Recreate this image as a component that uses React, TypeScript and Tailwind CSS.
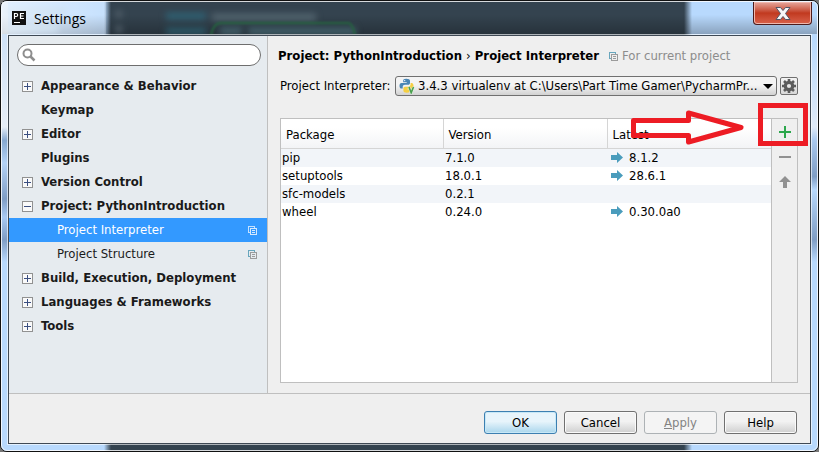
import { useState } from 'react'

type TreeItem = { label: string; kind: 'closed' | 'open' | 'leaf' | 'child' }

const tree: TreeItem[] = [
  { label: 'Appearance & Behavior', kind: 'closed' },
  { label: 'Keymap', kind: 'leaf' },
  { label: 'Editor', kind: 'closed' },
  { label: 'Plugins', kind: 'leaf' },
  { label: 'Version Control', kind: 'closed' },
  { label: 'Project: PythonIntroduction', kind: 'open' },
  { label: 'Project Interpreter', kind: 'child' },
  { label: 'Project Structure', kind: 'child' },
  { label: 'Build, Execution, Deployment', kind: 'closed' },
  { label: 'Languages & Frameworks', kind: 'closed' },
  { label: 'Tools', kind: 'closed' },
]

const packages = [
  { name: 'pip', version: '7.1.0', latest: '8.1.2' },
  { name: 'setuptools', version: '18.0.1', latest: '28.6.1' },
  { name: 'sfc-models', version: '0.2.1', latest: '' },
  { name: 'wheel', version: '0.24.0', latest: '0.30.0a0' },
]

const interpreters = ['3.4.3 virtualenv at C:\\Users\\Part Time Gamer\\PycharmPr...']

function ExpandIcon({ open }: { open: boolean }) {
  return (
    <svg width="11" height="11" viewBox="0 0 11 11" shapeRendering="crispEdges" aria-hidden="true">
      <rect x="0.5" y="0.5" width="10" height="10" fill="#fafafa" stroke="#919191" />
      <path d={open ? 'M2 5.5h7' : 'M2 5.5h7M5.5 2v7'} stroke="#3b4f81" />
    </svg>
  )
}

function ProjectIcon({ selected = false }: { selected?: boolean }) {
  return (
    <svg width="9" height="9" viewBox="0 0 9 9" fill="none" shapeRendering="crispEdges" aria-hidden="true">
      <path d="M2 6.5H.5v-6h6V2" stroke={selected ? '#c4e1ff' : '#68a6bd'} />
      <rect x="2.5" y="2.5" width="6" height="6" stroke={selected ? '#d5e9ff' : '#9b9b9b'} />
      <path d="M4 4.5h3M4 6.5h3" stroke={selected ? '#d5e9ff' : '#9b9b9b'} />
    </svg>
  )
}

function PythonIcon() {
  return (
    <svg width="16" height="16" viewBox="0 0 16 16" aria-hidden="true">
      <path d="M7.2.8c-2.3 0-3 .8-3 2v1.5h3.5v.6H2.500C1.200 4.900.5 6 .5 7.700s.7 2.900 1.900 2.900h1.300V8.900c0-1.200 1-2.100 2.200-2.100h3.300c1 0 1.800-.8 1.800-1.800V2.800c0-1.300-1.300-2-3.800-2z" fill="#4a86b5" />
      <circle cx="5.700" cy="2.600" r=".7" fill="#fff" />
      <path d="M11.600 4.900v1.700c0 1.200-1 2.100-2.200 2.100H6.200c-1 0-1.800.8-1.800 1.800v2.300c0 1.300 1.200 1.900 3.400 1.900s3.400-.7 3.400-1.900v-1.500H7.800v-.6h4.700c1.300 0 2-1.200 2-2.900s-.7-2.900-1.900-2.900z" fill="#f5cf42" />
      <path d="M10 9l2.200 5.800L14.500 9" fill="none" stroke="#e9efe4" strokeWidth="2.400" />
      <path d="M10 9l2.200 5.800L14.500 9" fill="none" stroke="#4aa04f" strokeWidth="1.600" />
    </svg>
  )
}

function GearIcon() {
  return (
    <svg width="14" height="14" viewBox="0 0 14 14" fill="none" stroke="#5c5c5c" aria-hidden="true">
      <circle cx="7" cy="7" r="3.700" strokeWidth="3.200" />
      <path d="M7 0v3M7 11v3M0 7h3M11 7h3M2 2l2.200 2.200M9.800 9.800L12 12M12 2L9.800 4.200M4.200 9.800L2 12" strokeWidth="2.600" />
    </svg>
  )
}

// blurred desktop showing through the glass title bar
function GlassBackdrop() {
  return (
    <svg className="absolute left-0 top-0 h-full w-full" aria-hidden="true">
      <g className="blur-[3px]" fill="none" strokeWidth="7">
        <path d="M164 14h40" stroke="#2f6072" />
        <path d="M210 15h104" stroke="#52646e" />
        <path d="M164 29h40" stroke="#2b5867" />
        <path d="M218 29h22M246 29h108" stroke="#42616b" />
        <path d="M114 12h6M114 27h6" stroke="#52606b" />
        <path d="M4 10h60M4 26h52" stroke="#b2d0ea" />
      </g>
      <path className="blur-[1px]" d="M209 34q2-13 10-13h128q4 2 6 12" fill="none" stroke="#25633f" strokeWidth="2" />
    </svg>
  )
}

function TitleBar() {
  return (
    <header className="relative flex h-[32px] shrink-0 items-center overflow-hidden bg-linear-to-b from-transparent from-40% to-black/25">
      <GlassBackdrop />
      <div className="absolute inset-y-0 left-0 w-[104px] bg-linear-to-r from-white/60 to-white/20" />
      <div className="relative flex items-center gap-2 pl-[10px]">
        <svg width="14" height="14" viewBox="0 0 14 14" aria-hidden="true">
          <rect width="14" height="14" fill="#111" />
          <path d="M2.500 8V2.500h1.700a1.500 1.500 0 010 3H2.500M12 2.500H8.500v5H12M8.500 5H11.500" fill="none" stroke="#fff" strokeWidth="1.200" />
          <path d="M2 11.500h6" stroke="#fff" />
        </svg>
        <h1 className="pt-px font-['Open_Sans',sans-serif] text-[14px] leading-5 text-black">Settings</h1>
      </div>
      <button type="button" aria-label="Close"
        className="absolute right-[5px] top-0 flex h-[23px] w-[59px] items-center justify-center rounded-b-[4px] border border-t-0 border-[#4d1b1b] bg-linear-to-b from-[#e5a79d] from-0% via-[#c1391f] via-50% to-[#d9614a] shadow-[inset_0_0_0_1px_#f0b8ae]">
        <svg width="16" height="13" viewBox="0 0 16 13" aria-hidden="true">
          <path d="M1 .5h4.500L8 3.500 10.500.5H15L10.500 6.500 15 12.500h-4.500L8 9.500l-2.500 3H1l4.500-6z" fill="#f7f7f7" stroke="#535666" strokeLinejoin="round" />
        </svg>
      </button>
    </header>
  )
}

function Sidebar({ current, onSelect }: { current: string; onSelect: (label: string) => void }) {
  return (
    <aside className="w-[259px] shrink-0 border-r border-[#bfbfbf] bg-[#e6ebef] pt-2">
      <label className="mx-2 flex h-[22px] w-[244px] items-center rounded-full border border-[#6e6e6e] bg-white pl-1">
        <svg width="14" height="14" viewBox="0 0 14 14" fill="none" stroke="#8e8e8e" aria-hidden="true">
          <circle cx="5.500" cy="5.500" r="4" strokeWidth="2" />
          <path d="M8.500 8.500l4 4" strokeWidth="2.500" />
        </svg>
        <input type="text" aria-label="Search settings" className="min-w-0 flex-1 bg-transparent px-1 outline-none" />
      </label>
      <ul className="mt-2">
        {tree.map(item => {
          const selected = item.label === current
          return (
            <li key={item.label}>
              <button type="button" onClick={() => onSelect(item.label)}
                className={`flex h-6 w-full items-center text-left ${selected ? 'bg-[#3399ff] text-white' : 'text-[#1a1a1a]'}`}>
                {item.kind === 'child' ? (
                  <>
                    <span className="flex-1 pl-12">{item.label}</span>
                    <span className="pr-[10px]"><ProjectIcon selected={selected} /></span>
                  </>
                ) : (
                  <>
                    <span className="w-8 shrink-0 pl-[13px]">{item.kind !== 'leaf' && <ExpandIcon open={item.kind === 'open'} />}</span>
                    <span className="whitespace-nowrap font-bold">{item.label}</span>
                  </>
                )}
              </button>
            </li>
          )
        })}
      </ul>
    </aside>
  )
}

function PackageTable() {
  const th = 'border-b border-r border-[#d5d5d5] pl-[5px] pt-[3px] text-left font-normal'
  return (
    <table className="w-full table-fixed border-collapse">
      <colgroup>
        <col className="w-[162px]" />
        <col className="w-[164px]" />
        <col />
      </colgroup>
      <thead>
        <tr className="h-[29px] bg-linear-to-b from-white from-30% to-[#f3f4f6]">
          <th className={th}>Package</th>
          <th className={th}>Version</th>
          <th className="border-b border-[#d5d5d5] pl-[5px] pt-[3px] text-left font-normal">Latest</th>
        </tr>
      </thead>
      <tbody>
        {packages.map(p => (
          <tr key={p.name} className="h-[18px] odd:bg-[#f2f5f9]">
            <td className="pl-px">{p.name}</td>
            <td className="pl-[2px]">{p.version}</td>
            <td className="pl-1">
              {p.latest && (
                <span className="flex items-center gap-[6px]">
                  <svg width="12" height="11" viewBox="0 0 12 11" aria-hidden="true">
                    <path d="M0 3h6V0l6 5.500L6 11V8H0z" fill="#4a9cbc" />
                  </svg>
                  {p.latest}
                </span>
              )}
            </td>
          </tr>
        ))}
      </tbody>
    </table>
  )
}

function Toolbar() {
  const button = 'flex h-[25px] w-full items-center justify-center'
  return (
    <div className="w-[26px] shrink-0 border-l border-[#bfbfbf] bg-[#efefef]">
      <button type="button" aria-label="Install package" className={button}>
        <svg width="12" height="12" viewBox="0 0 12 12"><path d="M0 6h12M6 0v12" stroke="#2ca74c" strokeWidth="2" /></svg>
      </button>
      <button type="button" aria-label="Uninstall package" className={button}>
        <svg width="12" height="2" viewBox="0 0 12 2"><path d="M0 1h12" stroke="#919191" strokeWidth="2" /></svg>
      </button>
      <button type="button" aria-label="Upgrade package" className={button}>
        <svg width="12" height="12" viewBox="0 0 12 12"><path d="M6 0l6 6H8v6H4V6H0z" fill="#919191" /></svg>
      </button>
    </div>
  )
}

// red marks pointing at the install button
function Annotation() {
  return (
    <div className="pointer-events-none">
      <svg className="absolute right-[50px] top-[-11px]" width="118" height="38" viewBox="0 0 118 38" aria-hidden="true">
        <path d="M4.500 12.500H59.500V5L112 19.500 59.500 34V27.500H4.500z" fill="none" stroke="#ed1c24" strokeWidth="5" strokeLinejoin="round" />
      </svg>
      <div className="absolute right-[-11px] top-[-16px] h-[43px] w-[50px] border-5 border-[#ed1c24]" />
    </div>
  )
}

function InterpreterPage() {
  return (
    <main className="flex min-w-0 flex-1 flex-col pb-[10px] pl-3 pr-3 pt-[10px]">
      <div className="flex h-5 items-center whitespace-nowrap">
        <h2 className="-ml-[2px] font-bold">Project: PythonIntroduction <span className="font-normal">›</span> Project Interpreter</h2>
        <span className="ml-[10px] flex items-center gap-1 text-[#8c8c8c]"><ProjectIcon />For current project</span>
      </div>
      <div className="mt-[10px] flex h-5 items-center">
        <label htmlFor="interpreter" className="w-[115px] shrink-0 whitespace-nowrap">Project Interpreter:</label>
        <div className="relative flex h-5 min-w-0 flex-1 items-center rounded-[3px] border border-[#707070] bg-linear-to-b from-[#f4f4f4] from-45% to-[#d2d2d2] pl-[3px]">
          <PythonIcon />
          <select id="interpreter" className="h-full min-w-0 flex-1 appearance-none bg-transparent pl-[3px] pr-[14px] outline-none">
            {interpreters.map(name => <option key={name}>{name}</option>)}
          </select>
          <svg className="pointer-events-none absolute right-[3px]" width="10" height="5" viewBox="0 0 10 5" aria-hidden="true">
            <path d="M0 0h10L5 5z" fill="#000" />
          </svg>
        </div>
        <button type="button" aria-label="Interpreter options"
          className="ml-[3px] flex h-[18px] w-[18px] items-center justify-center rounded-[2px] border border-[#707070] bg-linear-to-b from-[#f4f4f4] to-[#d8d8d8]">
          <GearIcon />
        </button>
      </div>
      <div className="relative mt-[22px] flex flex-1 border border-[#bfbfbf] bg-white">
        <div className="min-w-0 flex-1"><PackageTable /></div>
        <Toolbar />
        <Annotation />
      </div>
    </main>
  )
}

function Footer() {
  const base = 'h-[23px] w-[73px] rounded-[3px] border text-center'
  const gray = 'border-[#707070] bg-linear-to-b from-[#f2f2f2] from-45% to-[#cfcfcf] text-black shadow-[inset_0_0_0_1px_#fafafa]'
  return (
    <footer className="flex h-[50px] shrink-0 justify-end gap-[7px] border-t border-[#bfbfbf] pr-[13px] pt-[17px]">
      <button type="button" className={`${base} border-[#3c7fb1] bg-linear-to-b from-[#e7f4fb] from-45% to-[#a9d6ec] shadow-[inset_0_0_0_1px_#c7e8f7]`}>OK</button>
      <button type="button" className={`${base} ${gray}`}>Cancel</button>
      <button type="button" disabled className={`${base} border-[#adb2b5] bg-[#f4f4f4] text-[#838383]`}><u>A</u>pply</button>
      <button type="button" className={`${base} ${gray}`}>Help</button>
    </footer>
  )
}

export default function App() {
  const [current, setCurrent] = useState('Project Interpreter')

  return (
    <div className="flex min-h-screen flex-col bg-[#777] font-['DejaVu_Sans_Condensed','DejaVu_Sans',sans-serif] text-[13px] leading-[18px] text-black">
      <div className="flex flex-1 flex-col rounded-[7px] border border-[#111] [background:linear-gradient(180deg,#cfe2f8_8%,#e6eef8_28%,#86a8d0_31%,#b4d3f7_36%,#7f9dc4_44%,#a9caf2_48%,#7f9dc4_53%,#b8d9fd_58%)_left/7px_100%_no-repeat,linear-gradient(180deg,#b8d9fd_8%,#dfe9f6_28%,#a9c8ee_31%,#7f9dc4_39%,#b8d9fd_42%,#7f9dc4_53%,#b8d9fd_58%)_right/7px_100%_no-repeat,linear-gradient(90deg,#b8d9fd_103px,#34434f_110px,#34434f_calc(100%-134px),#b8d9fd_calc(100%-126px))]">
        <div className="flex flex-1 flex-col rounded-[6px] border border-white/80">
          <TitleBar />
          <div className="mx-[5px] mb-[5px] flex flex-1 flex-col border border-white/60">
            <div className="flex flex-1 flex-col border border-[#3f4954] bg-[#efefef]">
              <div className="flex flex-1">
                <Sidebar current={current} onSelect={setCurrent} />
                <InterpreterPage />
              </div>
              <Footer />
            </div>
          </div>
        </div>
      </div>
    </div>
  )
}
